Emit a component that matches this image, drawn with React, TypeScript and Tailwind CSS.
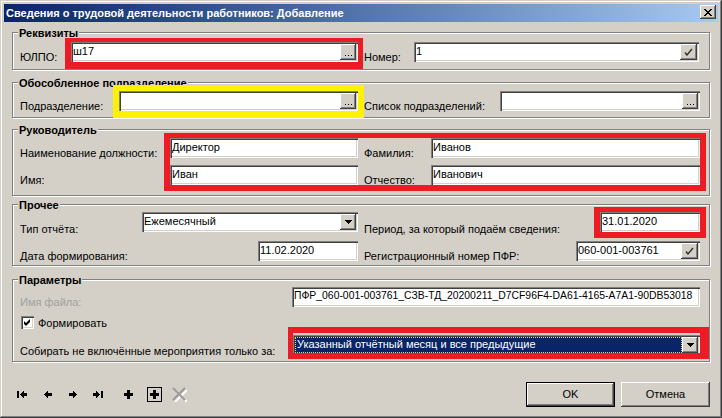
import React from "react";

const SUNKEN =
  "shadow-[inset_1px_1px_0_#808080,inset_2px_2px_0_#404040,inset_-1px_-1px_0_#ffffff,inset_-2px_-2px_0_#d4d0c8]";
const RAISED =
  "shadow-[inset_-1px_-1px_0_#404040,inset_1px_1px_0_#ffffff,inset_-2px_-2px_0_#808080,inset_2px_2px_0_#d4d0c8]";

function Ellipsis() {
  return (
    <div className={`flex h-[16px] w-[16px] shrink-0 items-end justify-center bg-[#d4d0c8] pb-[4px] ${RAISED}`}>
      <svg width="7" height="1" viewBox="0 0 7 1" shapeRendering="crispEdges">
        <path d="M0 0h1v1H0z M3 0h1v1H3z M6 0h1v1H6z" fill="#000" />
      </svg>
    </div>
  );
}

function CheckBtn() {
  return (
    <div className={`flex h-[16px] w-[17px] shrink-0 items-center justify-center bg-[#d4d0c8] ${RAISED}`}>
      <svg width="9" height="8" viewBox="0 0 9 8">
        <path d="M1 4.5 L3 7 L8 1" fill="none" stroke="#303030" strokeWidth="1.4" />
      </svg>
    </div>
  );
}

function DropBtn() {
  return (
    <div className={`flex h-[16px] w-[16px] shrink-0 items-center justify-center bg-[#d4d0c8] ${RAISED}`}>
      <svg width="7" height="4" viewBox="0 0 7 4" shapeRendering="crispEdges">
        <path d="M0 0h7v1H0z M1 1h5v1H1z M2 2h3v1H2z M3 3h1v1H3z" fill="#000" />
      </svg>
    </div>
  );
}

function Edit({
  cls,
  value,
  btn,
  textCls,
}: {
  cls: string;
  value?: string;
  btn?: "dots" | "check" | "drop";
  textCls?: string;
}) {
  return (
    <div className={`flex h-[20px] shrink-0 bg-white p-[2px] ${SUNKEN} ${cls}`}>
      <div className={`flex-1 overflow-hidden whitespace-nowrap leading-[14px] ${textCls ?? ""}`}>{value}</div>
      {btn === "dots" && <Ellipsis />}
      {btn === "check" && <CheckBtn />}
      {btn === "drop" && <DropBtn />}
    </div>
  );
}

function Label({ cls, children }: { cls: string; children: React.ReactNode }) {
  return <div className={`shrink-0 whitespace-nowrap leading-[14px] ${cls}`}>{children}</div>;
}

function Group({
  title,
  cls,
  children,
}: {
  title: string;
  cls: string;
  children: React.ReactNode;
}) {
  return (
    <div
      className={`relative shrink-0 border border-[#808080] shadow-[1px_1px_0_#ffffff,inset_1px_1px_0_#ffffff] ${cls}`}
    >
      <div className="absolute left-[5px] top-[-7px] bg-[#d4d0c8] px-[1px] font-bold leading-[14px]">
        {title}
      </div>
      {children}
    </div>
  );
}

function NavIcons() {
  return (
    <div className="flex items-center">
      {/* first */}
      <svg className="ml-[5px]" width="10" height="7" viewBox="0 0 10 7" shapeRendering="crispEdges">
        <path d="M0 0h2v7H0z M6 0h1v7H6z M5 1h1v5H5z M4 2h1v3H4z M3 3h1v1H3z M7 2h3v3H7z" fill="#000" />
      </svg>
      {/* prev */}
      <svg className="ml-[17px]" width="8" height="7" viewBox="0 0 8 7" shapeRendering="crispEdges">
        <path d="M3 0h1v7H3z M2 1h1v5H2z M1 2h1v3H1z M0 3h1v1H0z M4 2h4v3H4z" fill="#000" />
      </svg>
      {/* next */}
      <svg className="ml-[17px]" width="8" height="7" viewBox="0 0 8 7" shapeRendering="crispEdges">
        <path d="M0 2h4v3H0z M4 0h1v7H4z M5 1h1v5H5z M6 2h1v3H6z M7 3h1v1H7z" fill="#000" />
      </svg>
      {/* last */}
      <svg className="ml-[16px]" width="10" height="7" viewBox="0 0 10 7" shapeRendering="crispEdges">
        <path d="M0 2h3v3H0z M3 0h1v7H3z M4 1h1v5H4z M5 2h1v3H5z M6 3h1v1H6z M8 0h2v7H8z" fill="#000" />
      </svg>
      {/* insert */}
      <svg className="ml-[21px]" width="9" height="9" viewBox="0 0 9 9" shapeRendering="crispEdges">
        <path d="M3 0h3v9H3z M0 3h9v3H0z" fill="#000" />
      </svg>
      {/* boxed plus */}
      <svg className="ml-[14px]" width="15" height="15" viewBox="0 0 15 15" shapeRendering="crispEdges">
        <rect x="0.5" y="0.5" width="14" height="14" fill="none" stroke="#000" />
        <path d="M6 3h3v9H6z M3 6h9v3H3z" fill="#000" />
      </svg>
      {/* delete disabled */}
      <svg className="ml-[10px]" width="15" height="15" viewBox="0 0 15 15">
        <path d="M2 2 L14 14 M14 2 L2 14" stroke="#ffffff" strokeWidth="2" transform="translate(1,1)" />
        <path d="M1 1 L13 13 M13 1 L1 13" stroke="#9a9a9a" strokeWidth="2" />
      </svg>
    </div>
  );
}

export default function App() {
  return (
    <div className="relative h-[418px] w-[722px] overflow-hidden bg-[#d4d0c8] p-[4px] font-['Liberation_Sans',Arial,sans-serif] text-[11px] text-black shadow-[inset_-1px_-1px_0_#404040,inset_1px_1px_0_#d4d0c8,inset_-2px_-2px_0_#808080,inset_2px_2px_0_#ffffff]">
      {/* Title bar */}
      <div className="flex h-[18px] items-start justify-between bg-gradient-to-r from-[#0a246a] to-[#a6caf0] pl-[2px] pr-[2px]">
        <div className="pt-[2px] font-bold leading-[14px] text-white">
          Сведения о трудовой деятельности работников: Добавление
        </div>
        <div className={`mt-[1px] flex h-[14px] w-[16px] items-center justify-center bg-[#d4d0c8] ${RAISED}`}>
          <svg width="8" height="7" viewBox="0 0 8 7" shapeRendering="crispEdges">
            <path
              d="M0 0h2v1H0z M6 0h2v1H6z M1 1h2v1H1z M5 1h2v1H5z M2 2h4v1H2z M3 3h2v1H3z M2 4h4v1H2z M1 5h2v1H1z M5 5h2v1H5z M0 6h2v1H0z M6 6h2v1H6z"
              fill="#000"
            />
          </svg>
        </div>
      </div>

      <div className="flex flex-col px-[8px]">
        {/* Реквизиты */}
        <Group title="Реквизиты" cls="mt-[10px] h-[38px]">
          <div className="flex items-start pl-[7px] pt-[9px]">
            <Label cls="w-[51px] pt-[8px]">ЮЛПО:</Label>
            <Edit cls="w-[287px]" value="ш17" btn="dots" />
            <Label cls="ml-[6px] w-[50px] pt-[8px]">Номер:</Label>
            <Edit cls="w-[285px]" value="1" btn="check" />
          </div>
        </Group>

        {/* Обособленное подразделение */}
        <Group title="Обособленное подразделение" cls="mt-[12px] h-[36px]">
          <div className="flex items-start pl-[7px] pt-[8px]">
            <Label cls="w-[99px] pt-[8px]">Подразделение:</Label>
            <Edit cls="w-[239px]" btn="dots" />
            <Label cls="ml-[6px] w-[136px] pt-[8px]">Список подразделений:</Label>
            <Edit cls="w-[200px]" btn="dots" />
          </div>
        </Group>

        {/* Руководитель */}
        <Group title="Руководитель" cls="mt-[11px] h-[67px]">
          <div className="flex flex-col gap-[5px] pl-[7px] pt-[8px]">
            <div className="flex items-start">
              <Label cls="w-[150px] pt-[8px]">Наименование должности:</Label>
              <Edit cls="w-[188px]" value="Директор" />
              <Label cls="ml-[6px] w-[67px] pt-[8px]">Фамилия:</Label>
              <Edit cls="w-[269px]" value="Иванов" />
            </div>
            <div className="flex items-start">
              <Label cls="w-[150px] pt-[8px]">Имя:</Label>
              <Edit cls="w-[188px]" value="Иван" />
              <Label cls="ml-[6px] w-[67px] pt-[8px]">Отчество:</Label>
              <Edit cls="w-[269px]" value="Иванович" />
            </div>
          </div>
        </Group>

        {/* Прочее */}
        <Group title="Прочее" cls="mt-[8px] h-[62px]">
          <div className="flex flex-col gap-[5px] pl-[7px] pt-[7px]">
            <div className="flex items-start">
              <Label cls="w-[122px] pt-[10px]">Тип отчёта:</Label>
              <Edit cls="w-[216px]" value="Ежемесячный" btn="drop" />
              <Label cls="ml-[6px] w-[236px] pt-[10px]">Период, за который подаём сведения:</Label>
              <Edit cls="w-[100px]" value="31.01.2020" />
            </div>
            <div className="flex items-start">
              <Label cls="w-[238px] pt-[8px]">Дата формирования:</Label>
              <Edit cls="w-[100px]" value="11.02.2020" />
              <Label cls="ml-[6px] w-[212px] pt-[8px]">Регистрационный номер ПФР:</Label>
              <Edit cls="w-[124px]" value="060-001-003761" btn="check" />
            </div>
          </div>
        </Group>

        {/* Параметры */}
        <Group title="Параметры" cls="mt-[13px] h-[83px]">
          <div className="flex flex-col pl-[7px] pt-[7px]">
            <div className="flex items-start">
              <Label cls="w-[272px] pt-[8px] text-[#a0a0a0]">Имя файла:</Label>
              <Edit
                cls="w-[408px]"
                textCls="text-[10.4px]"
                value="ПФР_060-001-003761_СЗВ-ТД_20200211_D7CF96F4-DA61-4165-A7A1-90DB53018"
              />
            </div>
            <div className="mt-[7px] flex h-[13px] items-center">
              <div className={`ml-[1px] flex h-[13px] w-[13px] items-center justify-center bg-white ${SUNKEN}`}>
                <svg width="7" height="7" viewBox="0 0 7 7">
                  <path d="M0 2 L2 4 L6 0 L6 3 L2 7 L0 5 Z" fill="#000" />
                </svg>
              </div>
              <div className="ml-[4px] leading-[14px]">Формировать</div>
            </div>
            <div className="mt-[6px] flex items-start">
              <Label cls="w-[273px] pt-[9px]">Собирать не включённые мероприятия только за:</Label>
              <div className={`flex h-[20px] w-[407px] shrink-0 bg-white p-[2px] ${SUNKEN}`}>
                <div className="flex-1 overflow-hidden whitespace-nowrap border border-dotted border-[#d8d890] bg-[#0a246a] pl-[1px] leading-[13px] text-white">
                  Указанный отчётный месяц и все предыдущие
                </div>
                <DropBtn />
              </div>
            </div>
          </div>
        </Group>

        {/* Bottom bar */}
        <div className="mt-[20px] flex items-center justify-between">
          <NavIcons />
          <div className="flex gap-[6px]">
            <div className="flex h-[25px] w-[89px] items-center justify-center border border-black bg-[#d4d0c8] shadow-[inset_-1px_-1px_0_#404040,inset_1px_1px_0_#ffffff,inset_-2px_-2px_0_#808080]">
              OK
            </div>
            <div className={`flex h-[25px] w-[89px] items-center justify-center bg-[#d4d0c8] ${RAISED}`}>
              Отмена
            </div>
          </div>
        </div>
      </div>

      {/* Annotation frames drawn over the form */}
      <div className="pointer-events-none absolute left-[65px] top-[38px] h-[31px] w-[298px] border-b-[7px] border-l-[6px] border-r-[5px] border-t-[4px] border-[#ed1c24]" />
      <div className="pointer-events-none absolute left-[113px] top-[85px] h-[33px] w-[251px] border-b-[7px] border-l-[6px] border-r-[6px] border-t-[6px] border-[#fff200]" />
      <div className="pointer-events-none absolute left-[164px] top-[133px] h-[58px] w-[542px] border-[6px] border-t-[5px] border-[#ed1c24]" />
      <div className="pointer-events-none absolute left-[594px] top-[207px] h-[31px] w-[112px] border-[6px] border-t-[5px] border-[#ed1c24]" />
      <div className="pointer-events-none absolute left-[288px] top-[327px] h-[32px] w-[421px] border-b-[6px] border-l-[5px] border-r-[9px] border-t-[6px] border-[#ed1c24]" />
    </div>
  );
}
